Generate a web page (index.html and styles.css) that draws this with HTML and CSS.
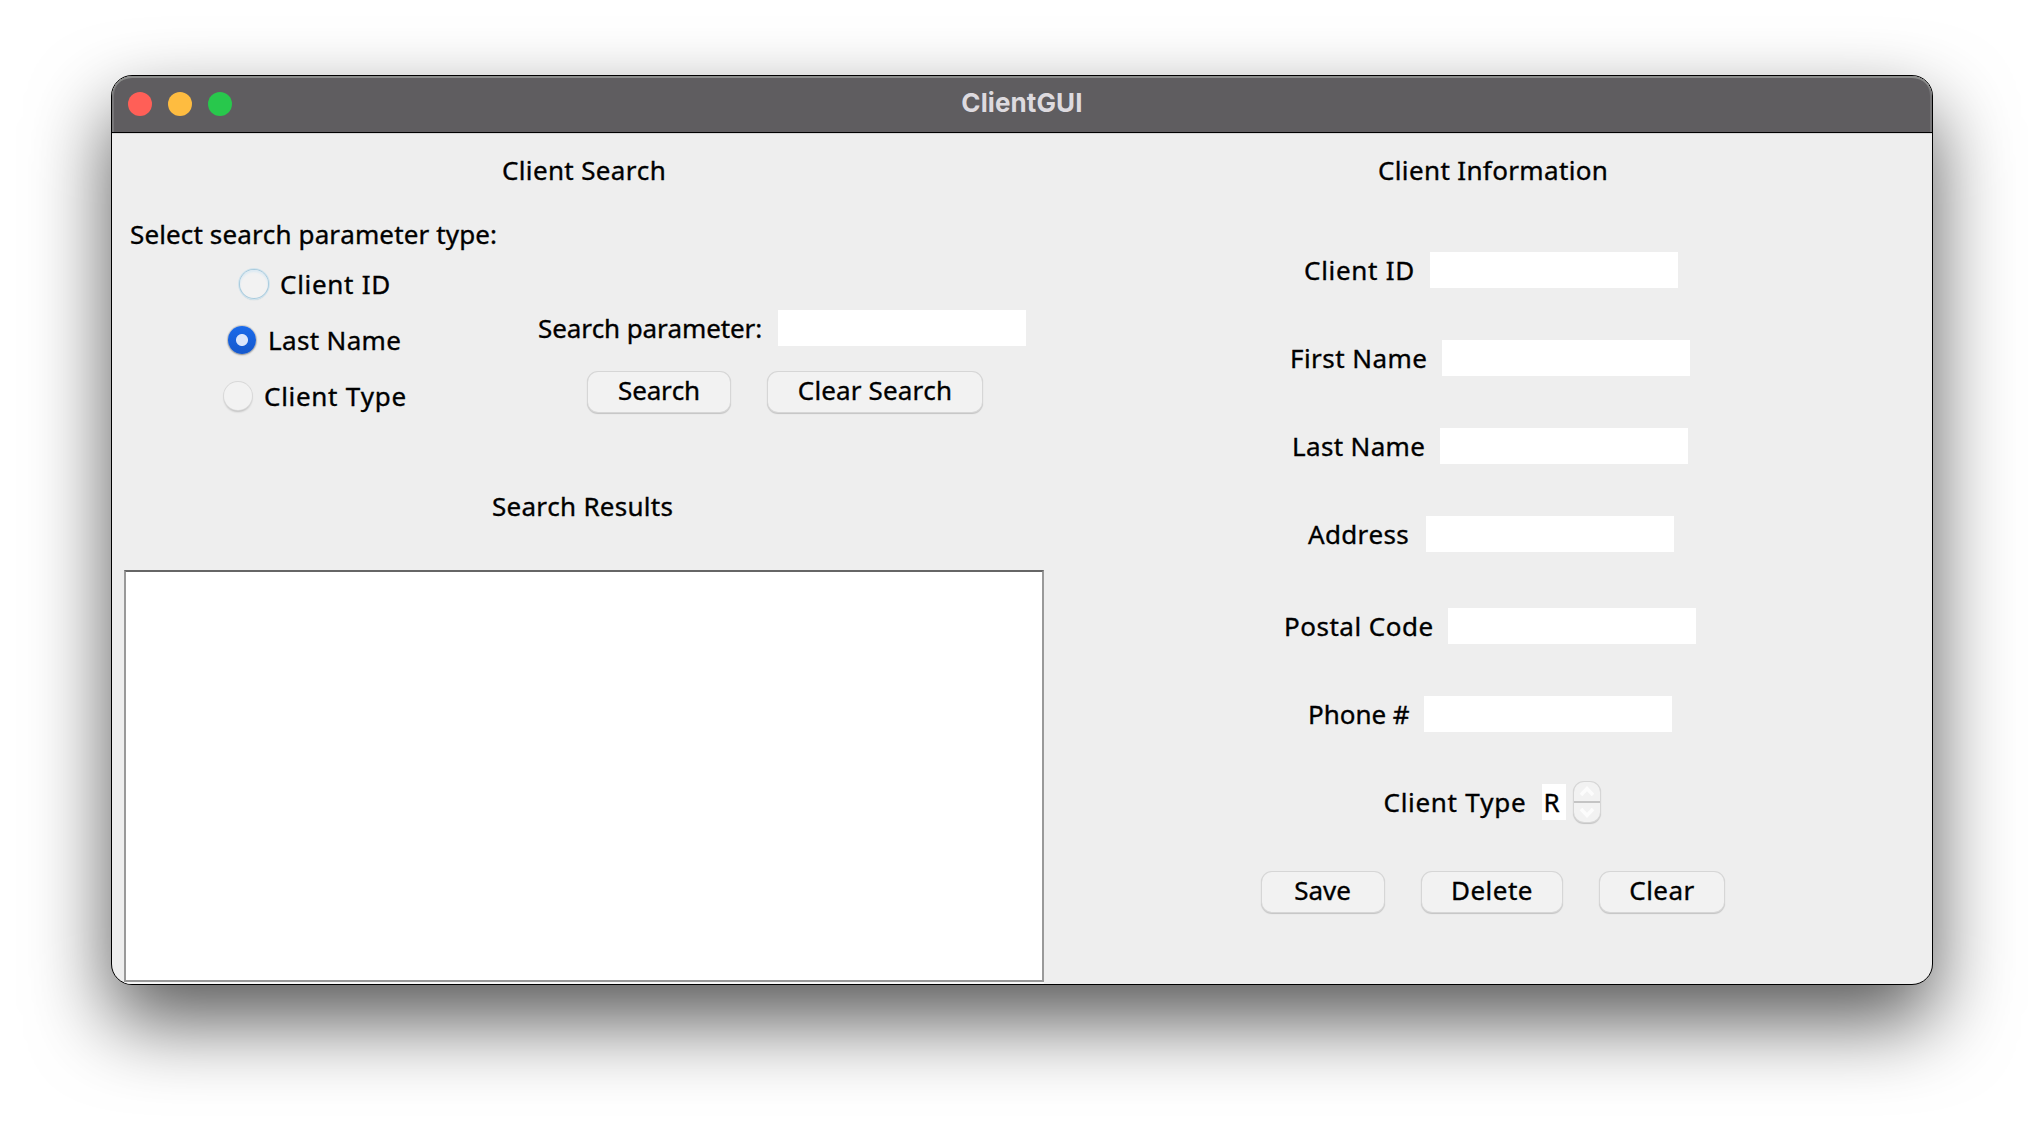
FILE: index.html
```html
<!DOCTYPE html>
<html lang="en">
<head>
<meta charset="utf-8">
<title>ClientGUI</title>
<link rel="stylesheet" href="styles.css">
</head>
<body>
<div class="window">
  <header class="titlebar">
    <div class="lights"><i class="light close"></i><i class="light minimize"></i><i class="light zoom"></i></div>
    <h1 class="title">ClientGUI</h1>
  </header>
  <main class="content">
    <section class="search-panel">
      <h2 class="heading t-client-search">Client Search</h2>
      <div class="search-area">
        <div class="param-types">
          <div class="text t-select">Select search parameter type:</div>
          <div class="radio-row r-id"><i class="radio focused"></i><span class="text t-client-id">Client ID</span></div>
          <div class="radio-row r-last"><i class="radio selected"></i><span class="text t-last">Last Name</span></div>
          <div class="radio-row r-type"><i class="radio"></i><span class="text t-type">Client Type</span></div>
        </div>
        <div class="search-form">
          <div class="search-row"><span class="text t-param">Search parameter:</span><div class="field"></div></div>
          <div class="search-buttons">
            <div class="button b-search">Search</div>
            <div class="button b-clear-search">Clear Search</div>
          </div>
        </div>
      </div>
      <h2 class="heading results-heading">Search Results</h2>
      <div class="results"></div>
    </section>
    <section class="info-panel">
      <h2 class="heading t-info">Client Information</h2>
      <div class="rows">
        <div class="row w-id"><span class="text t-client-id">Client ID</span><div class="field"></div></div>
        <div class="row w-first"><span class="text t-first">First Name</span><div class="field"></div></div>
        <div class="row w-last"><span class="text t-last">Last Name</span><div class="field"></div></div>
        <div class="row w-address"><span class="text t-address">Address</span><div class="field"></div></div>
        <div class="row w-postal"><span class="text t-postal">Postal Code</span><div class="field"></div></div>
        <div class="row w-phone"><span class="text t-phone">Phone #</span><div class="field"></div></div>
        <div class="row w-type"><span class="text t-type">Client Type</span>
          <div class="spinner">
            <div class="spinner-value">R</div>
            <div class="stepper">
              <svg class="chevrons" viewBox="0 0 26 40"><path d="M7 13 13 6.500 19 13M7 27 13 33.500 19 27" fill="none" stroke="#fcfcfc" stroke-width="3.500"/><path d="M0 20H26" stroke="#c4c4c4" stroke-width="2"/></svg>
            </div>
          </div>
        </div>
      </div>
      <div class="info-buttons">
        <div class="button b-save">Save</div>
        <div class="button b-delete">Delete</div>
        <div class="button b-clear">Clear</div>
      </div>
    </section>
  </main>
</div>
</body>
</html>
```
FILE: styles.css
```css
* { box-sizing: border-box; }
body {
  margin: 0;
  height: 1132px;
  padding: 75px 0 0 111px;
  overflow: hidden;
  background: #fff;
  color: #000;
  font: 26px/36px "Noto Sans", sans-serif;
  font-kerning: none;
  white-space: nowrap;
}
.window {
  width: 1822px;
  height: 910px;
  border: 1px solid #000;
  border-radius: 21px;
  overflow: hidden;
  background: #eee;
  box-shadow: 0 36px 80px rgba(0, 0, 0, .66);
}
.titlebar {
  height: 57px;
  display: grid;
  grid-template-columns: 1fr auto 1fr;
  align-items: center;
  padding: 0 16px;
  background: #5f5d60;
  border-bottom: 1px solid #000;
  border-radius: 20px 20px 0 0;
  box-shadow: inset 0 2px 0 #8b8c8b, inset 2px 0 0 #777678, inset -2px 0 0 #777678;
}
.lights { display: flex; gap: 16px; }
.light { width: 24px; height: 24px; border-radius: 50%; }
.close { background: #ff5f57; }
.minimize { background: #febc40; }
.zoom { background: #28c84c; }
.title {
  margin: 0;
  padding-bottom: 2px;
  color: #dddadf;
  font: 700 26px/32px Inter, sans-serif;
  letter-spacing: .1px;
}
.content {
  height: 851px;
  display: grid;
  grid-template-columns: 936px 884px;
  border-top: 1px solid #d8d8d8;
  -webkit-text-stroke: .35px #000;
}
.heading { margin: 0; font-size: 26px; font-weight: 400; line-height: 36px; }
.search-panel, .info-panel { padding-top: 18px; display: flex; flex-direction: column; }

.search-area { display: flex; padding-left: 16px; margin-top: 28px; height: 272px; }
.t-client-search { padding-left: 390px; letter-spacing: .35px; }
.param-types { width: 372px; }
.t-select { padding-left: 2px; margin-bottom: 14px; letter-spacing: .13px; }
.radio-row { display: flex; align-items: center; gap: 12px; height: 36px; margin: 0 auto 20px; }
.r-id { width: 148px; }
.r-last { width: 172px; }
.r-type { width: 180px; }
.radio {
  flex: none;
  width: 28px;
  height: 28px;
  border-radius: 50%;
  background: #f2f2f2;
  box-shadow: 0 0 0 1px #d8d8d8, 0 2px 2px rgba(0, 0, 0, .2);
}
.focused { box-shadow: inset 0 2px 2px #dceaf3, 0 0 0 1px #a9cbdd, 0 0 0 2px #d3e4ed, 0 2px 1px #a9c0cc; }
.selected {
  background: radial-gradient(circle, #dbe6fb 5.500px, transparent 6.500px), linear-gradient(#1a6aea, #1558cc);
  box-shadow: 0 0 1px 1px rgba(0, 0, 0, .15), 0 1px 2px rgba(0, 0, 0, .3);
}
.search-form { padding: 94px 0 0 37px; }
.search-row { display: grid; grid-template-columns: 241px 248px; }
.t-param { padding-left: 1px; letter-spacing: -.13px; }
.field { width: 248px; height: 36px; background: #fff; }
.search-buttons { display: flex; gap: 38px; padding: 26px 0 0 51px; }
.button {
  height: 40px;
  border-radius: 10px;
  background: #f2f2f2;
  box-shadow: 0 0 0 1px #d6d6d6, 0 1px 1px 1px rgba(0, 0, 0, .18);
  text-align: center;
}
.b-search { width: 142px; letter-spacing: -.15px; }
.b-clear-search { width: 214px; letter-spacing: .13px; }
.results-heading { padding-left: 380px; letter-spacing: .26px; }
.results {
  width: 920px;
  height: 412px;
  margin: 46px 0 0 12px;
  border: 2px solid #999;
  border-top-color: #666;
  background: #fff;
  box-shadow: 0 2px 0 #f8f8f8;
}

.t-info { padding-left: 330px; letter-spacing: .36px; }
.rows { display: flex; flex-direction: column; align-items: center; gap: 52px; padding-top: 64px; }
.row { display: flex; justify-content: space-between; height: 36px; }
.w-id { width: 376px; }
.w-first { width: 400px; }
.w-last { width: 396px; }
.w-address { width: 368px; }
.w-postal { width: 412px; margin-top: 4px; }
.w-phone { width: 364px; }
.w-type { width: 218px; margin-left: 1px; }
.w-id .text, .w-type .text, .w-address .text { padding-left: 2px; }
.t-client-id { letter-spacing: .7px; }
.t-first { letter-spacing: .45px; }
.t-last { letter-spacing: .35px; }
.t-type { letter-spacing: .7px; }
.t-address { letter-spacing: .3px; }
.t-postal { letter-spacing: .5px; }
.t-phone { letter-spacing: -.05px; }
.spinner { display: flex; gap: 8px; align-items: center; }
.spinner-value { width: 24px; height: 36px; padding-left: 2px; background: #fff; }
.stepper {
  width: 26px;
  height: 40px;
  border-radius: 10px;
  background: #f2f2f2;
  box-shadow: 0 0 0 1px #d6d6d6, 0 1px 1px 1px rgba(0, 0, 0, .18);
}
.chevrons { display: block; width: 26px; height: 40px; }
.info-buttons { display: flex; gap: 38px; padding: 52px 0 0 214px; }
.b-save { width: 122px; padding-right: 1px; }
.b-delete { width: 140px; letter-spacing: .5px; }
.b-clear { width: 124px; letter-spacing: .45px; }
```
